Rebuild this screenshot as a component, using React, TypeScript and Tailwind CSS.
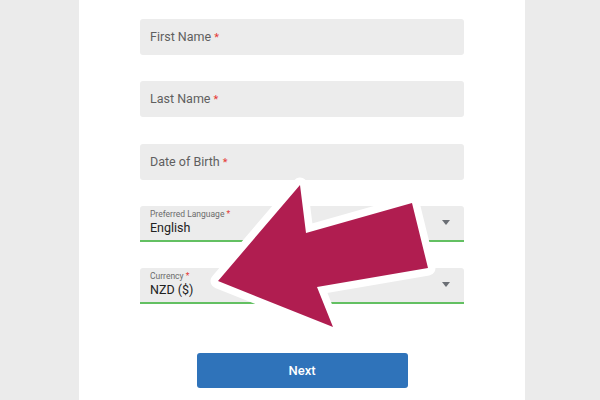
import React from "react";

function TextField({ label, className = "" }: { label: string; className?: string }) {
  return (
    <div className={"h-[36px] w-full rounded-[3px] bg-[#ececec] flex items-center px-[10px] pt-[1px] " + className}>
      <span className="text-[12.5px] text-[#5f5f5f]">
        {label} <span className="text-[#e53935] text-[11px]">*</span>
      </span>
    </div>
  );
}

function SelectField({ label, value }: { label: string; value: string }) {
  return (
    <div className="relative h-[36px] w-full rounded-t-[3px] bg-[#ececec] border-b-2 border-[#63c062] flex items-center pl-[10px] pr-[14px]">
      <div className="flex-1 flex flex-col leading-none -mt-[2px]">
        <span className="text-[8.5px] text-[#6b6b6b]">
          {label} <span className="text-[#e53935]">*</span>
        </span>
        <span className="text-[12.5px] text-[#222] mt-[3px]">{value}</span>
      </div>
      <svg width="8" height="5" viewBox="0 0 8 5" className="-mt-[2px]">
        <path d="M0 0 L8 0 L4 5 Z" fill="#6b6f75" />
      </svg>
    </div>
  );
}

export default function App() {
  return (
    <div
      className="relative w-[600px] h-[400px] bg-[#ebebeb] overflow-hidden pl-[79px]"
      style={{ fontFamily: "Roboto, 'Liberation Sans', sans-serif" }}
    >
      <div className="w-[446px] h-full bg-white px-[61px] pt-[19px] flex flex-col">
        <div className="flex flex-col">
          <TextField label="First Name" />
          <TextField label="Last Name" className="mt-[26px]" />
          <TextField label="Date of Birth" className="mt-[27px]" />
          <div className="mt-[26px]">
            <SelectField label="Preferred Language" value="English" />
          </div>
          <div className="mt-[26px]">
            <SelectField label="Currency" value="NZD ($)" />
          </div>
        </div>
        <div className="flex justify-center mt-[49px]">
          <button className="w-[211px] h-[35px] rounded-[3px] bg-[#2f73ba] text-white text-[13px] font-medium">
            Next
          </button>
        </div>
      </div>
      <svg
        className="absolute left-0 top-0 pointer-events-none"
        width="600"
        height="400"
        viewBox="0 0 600 400"
      >
        <polygon
          points="218,281 300,185 306,233 412,203 428,268 317,287 333,327"
          fill="#b01d50"
          stroke="#ffffff"
          strokeWidth="15"
          strokeLinejoin="round"
          paintOrder="stroke"
        />
      </svg>
    </div>
  );
}
